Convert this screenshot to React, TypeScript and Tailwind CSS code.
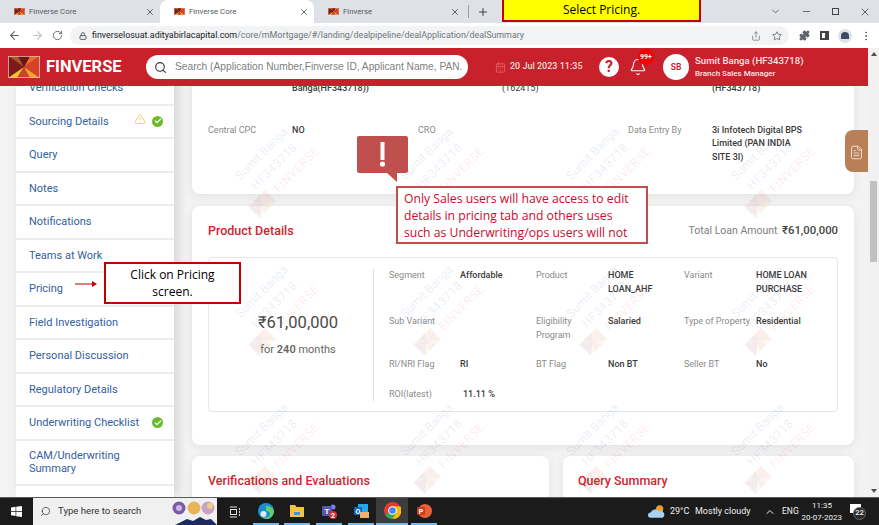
import { AlertTriangle, ArrowLeft, ArrowRight, Bell, CalendarDays, Check, ChevronDown, ChevronUp, FileText, Lock, Minus, MoreVertical, Plus, Puzzle, RotateCw, Search, Share, Star, X } from "lucide-react";

const ui = "font-['Roboto',sans-serif]";
const office = "font-['Open_Sans',sans-serif]";

function LogoMark({ className }: { className?: string }) {
  return (
    <svg viewBox="0 0 32 22" className={className}>
      <rect width="32" height="22" fill="#8f1d1f" />
      <polygon points="0,0 10,0 16,11" fill="#a5562c" />
      <polygon points="22,0 32,0 16,11" fill="#e8702a" />
      <polygon points="10,0 22,0 16,11" fill="#6d1517" />
      <polygon points="0,0 16,11 0,22" fill="#7d1a1c" />
      <polygon points="32,0 16,11 32,22" fill="#d8402a" />
      <polygon points="0,22 16,11 9,22" fill="#f2c230" />
      <polygon points="9,22 16,11 22,22" fill="#c8452a" />
      <polygon points="22,22 16,11 32,22" fill="#f0a62c" />
      <rect x="0.4" y="0.4" width="31.2" height="21.2" fill="none" stroke="#e8b9a8" strokeWidth="0.8" />
    </svg>
  );
}

function Tab({ title, active, width }: { title: string; active?: boolean; width: string }) {
  return (
    <div className={`flex h-[23px] items-center pl-[14px] pr-[5px] ${width} ${active ? "rounded-t-lg bg-white" : ""}`}>
      <LogoMark className="h-[7px] w-[11px] shrink-0" />
      <span className="ml-[4px] grow text-[7.8px] text-[#555a60]">{title}</span>
      <X size={10} strokeWidth={2} className="text-[#45484c]" />
    </div>
  );
}

function SideItem({ label, warn, done, tall }: { label: string; warn?: boolean; done?: boolean; tall?: boolean }) {
  return (
    <div className={`flex shrink-0 items-center border-b-2 border-[#ececec] pl-[13px] pr-[11px] text-[11px] leading-[13px] text-[#33609f] ${tall ? "h-[45px] pr-[20px]" : "h-[33.5px]"}`}>
      <span className="grow">{label}</span>
      {warn && <AlertTriangle size={12} strokeWidth={1.5} className="mr-[6px] -mt-[4px] text-[#f5c242]" />}
      {done && (
        <span className="flex size-[11px] items-center justify-center rounded-full bg-[#6cbb2f]">
          <Check size={8} strokeWidth={3.5} className="text-white" />
        </span>
      )}
    </div>
  );
}

function Label({ children }: { children: React.ReactNode }) {
  return <div className="text-[9px] leading-[13.5px] text-[#8a8a8a]">{children}</div>;
}

function Value({ children, className = "" }: { children: React.ReactNode; className?: string }) {
  return <div className={`text-[9px] font-medium leading-[13.5px] text-[#3a3a3a] ${className}`}>{children}</div>;
}

function Watermark() {
  return (
    <div className="flex h-[138px] w-[165.5px] items-center justify-center">
      <div className="flex w-[120px] shrink-0 -rotate-45 flex-col items-center pt-[8px] text-[12px] leading-[18px]">
        <div className="-translate-x-[5px] text-[rgba(60,110,190,0.12)]">Sumit Banga</div>
        <div className="-translate-x-[5px] tracking-[0.5px] text-[rgba(60,110,190,0.12)]">HF343718</div>
        <div className="flex -translate-x-[7px] items-center gap-[7px] whitespace-nowrap tracking-[0.5px] text-[rgba(220,60,40,0.1)]">
          <LogoMark className="h-[16px] w-[24px] opacity-[0.08]" />
          FINVERSE
        </div>
      </div>
    </div>
  );
}

function TaskIcon({ children, active }: { children: React.ReactNode; active?: boolean }) {
  return (
    <div className={`flex h-[27px] w-[31.6px] flex-col items-center justify-end ${active ? "bg-[#3c3c3c]" : ""}`}>
      <div className="flex grow items-center justify-center">{children}</div>
      <div className={`h-[2px] bg-[#76b9ed] ${active ? "w-full" : "w-[26px]"}`} />
    </div>
  );
}

export default function App() {
  return (
    <div className={`relative flex h-[525px] w-[879px] flex-col overflow-hidden bg-white ${ui}`}>
      {/* browser tabs */}
      <div className="flex h-[23px] shrink-0 items-center bg-[#dee1e6]">
        <Tab title="Finverse Core" width="w-[160px]" />
        <Tab title="Finverse Core" active width="w-[154px]" />
        <Tab title="Finverse" width="w-[151px]" />
        <div className="ml-[3px] h-[13px] w-px bg-[#9a9da1]" />
        <Plus size={12} strokeWidth={2} className="ml-[8px] text-[#3c4043]" />
        <div className="ml-auto flex items-center gap-[20px] pr-[8px] text-[#5f6368]">
          <ChevronDown size={11} />
          <Minus size={11} />
          <div className="relative size-[7px] border border-[#444]" />
          <X size={12} />
        </div>
      </div>

      {/* address bar */}
      <div className="flex h-[25px] shrink-0 items-center bg-white">
        <ArrowLeft size={13} strokeWidth={2} className="ml-[8px] text-[#5f6368]" />
        <ArrowRight size={13} strokeWidth={2} className="ml-[10px] text-[#c0c2c5]" />
        <RotateCw size={11} strokeWidth={2} className="ml-[8px] text-[#5f6368]" />
        <div className="ml-[7px] flex h-[19px] w-[719px] items-center rounded-full bg-[#f1f3f4] pl-[9px] pr-[6px]">
          <Lock size={8} strokeWidth={3} className="text-[#5f6368]" />
          <span className="ml-[5px] grow text-[8.9px] text-[#70757a]">
            <span className="text-[#202124]">finverselosuat.adityabirlacapital.com</span>/core/mMortgage/#/landing/dealpipeline/dealApplication/dealSummary
          </span>
          <Share size={10} className="mr-[11px] text-[#7b7f84]" />
          <Star size={10} strokeWidth={2} className="mr-[1px] text-[#5f6368]" />
        </div>
        <Puzzle size={11} fill="#5f6368" className="ml-[10px] text-[#5f6368]" />
        <div className="ml-[10px] size-[9px] border-2 border-r-[4px] border-[#444]" />
        <div className="ml-[9px] flex size-[14px] items-center justify-center rounded-full bg-[#dfe3ec]">
          <div className="h-[7px] w-[8px] rounded-t-full bg-[#3e4b66]" />
        </div>
        <MoreVertical size={12} className="ml-[8px] text-[#5f6368]" />
      </div>

      <div className="relative flex min-h-0 grow">
        <div className="flex w-[868px] shrink-0 flex-col">
          {/* app header */}
          <header className="z-10 flex h-[38px] shrink-0 items-center bg-[#c8212b] pl-[8px]">
            <LogoMark className="h-[22px] w-[32px]" />
            <span className="ml-[6px] w-[100px] text-[16.5px] font-bold text-white">FINVERSE</span>
            <div className="flex h-[24px] w-[322px] shrink-0 items-center overflow-hidden rounded-full bg-white pl-[8px]">
              <Search size={13} strokeWidth={2} className="shrink-0 text-[#333]" />
              <span className="ml-[8px] whitespace-nowrap font-['Liberation_Sans',sans-serif] text-[10.2px] text-[#808080]">Search (Application Number,Finverse ID, Applicant Name, PAN.</span>
            </div>
            <CalendarDays size={11} className="ml-[27px] shrink-0 text-[#e0625f]" />
            <span className="ml-[4px] w-[89px] shrink-0 whitespace-nowrap text-[9px] font-medium text-[#f6dcdc]">20 Jul 2023 11:35</span>
            <div className="flex size-[20px] shrink-0 items-center justify-center rounded-full bg-white text-[16px] font-bold leading-none text-[#c8212b]">?</div>
            <div className="relative ml-[10px]">
              <Bell size={18} strokeWidth={1.5} className="text-white" />
              <span className="absolute -right-[7px] -top-[9px] flex size-[16px] items-center justify-center rounded-full bg-[#f00000] text-[7px] font-bold text-white">99+</span>
            </div>
            <div className="ml-[16px] flex size-[26px] shrink-0 items-center justify-center rounded-full bg-white text-[8.5px] font-semibold text-[#c8212b]">SB</div>
            <div className="ml-[6px] whitespace-nowrap text-[#f8e4e4]">
              <div className="text-[9.6px] font-medium leading-[14px]">Sumit Banga (HF343718)</div>
              <div className="text-[8px] font-medium leading-[12px]">Branch Sales Manager</div>
            </div>
          </header>

          {/* scrolled page */}
          <div className="relative flex min-h-0 grow overflow-hidden bg-[#f3f3f3]">
            <aside className="ml-[16px] -mt-[14px] flex w-[158px] shrink-0 flex-col bg-white shadow-[4px_0_10px_rgba(0,0,0,0.12)]">
              <SideItem label="Verification Checks" />
              <SideItem label="Sourcing Details" warn done />
              <SideItem label="Query" />
              <SideItem label="Notes" />
              <SideItem label="Notifications" />
              <SideItem label="Teams at Work" />
              <SideItem label="Pricing" />
              <SideItem label="Field Investigation" />
              <SideItem label="Personal Discussion" />
              <SideItem label="Regulatory Details" />
              <SideItem label="Underwriting Checklist" done />
              <SideItem label="CAM/Underwriting Summary" tall />
              <SideItem label="Hunter" />
            </aside>

            <main className="ml-[18px] -mt-[30px] flex w-[662px] shrink-0 flex-col gap-[12px]">
              <section className="h-[138px] shrink-0 rounded-lg bg-white pl-[16px] pt-[26px] shadow-[0_2px_10px_rgba(0,0,0,0.08)]">
                <div className="grid grid-cols-[84px_126px_84px_126px_84px_126px]">
                  <div />
                  <Value>Banga(HF343718))</Value>
                  <div />
                  <Value className="font-normal">(162415)</Value>
                  <div />
                  <Value>(HF343718)</Value>
                </div>
                <div className="mt-[28px] grid grid-cols-[84px_126px_84px_126px_84px_126px]">
                  <Label>Central CPC</Label>
                  <Value>NO</Value>
                  <Label>CRO</Label>
                  <div />
                  <Label>Data Entry By</Label>
                  <Value>
                    3i Infotech Digital BPS
                    <br />
                    Limited (PAN INDIA
                    <br />
                    SITE 3I)
                  </Value>
                </div>
              </section>

              <section className="h-[239px] shrink-0 rounded-lg bg-white px-[16px] shadow-[0_2px_10px_rgba(0,0,0,0.08)]">
                <div className="flex h-[51px] items-center justify-between">
                  <h2 className="text-[12.5px] font-medium text-[#d0252f]">Product Details</h2>
                  <div className="text-[10.5px] text-[#808080]">
                    Total Loan Amount <span className="ml-[2px] text-[11.3px] font-medium text-[#444]">₹61,00,000</span>
                  </div>
                </div>
                <div className="flex h-[155px] rounded border border-[#e6e6e6] pb-[10px] pt-[11px]">
                  <div className="flex w-[165px] shrink-0 flex-col items-center border-r border-[#dcdcdc] pl-[14px]">
                    <div className="mt-[42px] text-[16.5px] leading-[24px] text-[#4a4a4a]">₹61,00,000</div>
                    <div className="mt-[7px] text-[11px] text-[#666]">for <b className="font-semibold">240</b> months</div>
                  </div>
                  <div className="ml-[15px] grid grid-cols-[71px_76px_72px_76px_72px_78px] grid-rows-[46px_43px_30px_auto]">
                    <Label>Segment</Label>
                    <Value>Affordable</Value>
                    <Label>Product</Label>
                    <Value>
                      HOME
                      <br />
                      LOAN_AHF
                    </Value>
                    <Label>Variant</Label>
                    <Value>
                      HOME LOAN
                      <br />
                      PURCHASE
                    </Value>
                    <Label>Sub Variant</Label>
                    <div />
                    <Label>
                      Eligibility
                      <br />
                      Program
                    </Label>
                    <Value>Salaried</Value>
                    <Label><span className="whitespace-nowrap">Type of Property</span></Label>
                    <Value>Residential</Value>
                    <Label>RI/NRI Flag</Label>
                    <Value>RI</Value>
                    <Label>BT Flag</Label>
                    <Value>Non BT</Value>
                    <Label>Seller BT</Label>
                    <Value>No</Value>
                    <Label>ROI(latest)</Label>
                    <Value className="pl-[3px]">11.11 %</Value>
                  </div>
                </div>
              </section>

              <div className="-mt-px flex gap-[14px]">
                <section className="h-[80px] w-[357px] shrink-0 rounded-lg bg-white pl-[16px] pt-[16px] shadow-[0_2px_10px_rgba(0,0,0,0.08)]">
                  <h2 className="text-[12.5px] font-medium text-[#d0252f]">Verifications and Evaluations</h2>
                </section>
                <section className="h-[80px] w-[291px] shrink-0 rounded-lg bg-white pl-[15px] pt-[16px] shadow-[0_2px_10px_rgba(0,0,0,0.08)]">
                  <h2 className="text-[12.5px] font-medium text-[#d0252f]">Query Summary</h2>
                </section>
              </div>
            </main>

            {/* watermark tiles lie over the cards */}
            <div className="pointer-events-none absolute left-[192px] top-[5px] grid grid-cols-[repeat(4,165.5px)]">
              {Array.from({ length: 12 }).map((_, i) => (
                <Watermark key={i} />
              ))}
            </div>

            {/* floating notes tab */}
            <div className="absolute right-0 top-[44px] flex h-[42px] w-[23px] items-center justify-center rounded-l-lg bg-[#b97f56] pt-[2px]">
              <FileText size={15} strokeWidth={1.5} className="text-[#f1e2d6]" />
            </div>
          </div>
        </div>

        {/* page scrollbar */}
        <div className="relative w-[11px] shrink-0 bg-[#f1f1f1]">
          <div className="absolute left-1/2 top-[4px] -translate-x-1/2 border-x-[3px] border-b-[4px] border-x-transparent border-b-[#505050]" />
          <div className="absolute inset-x-[2px] top-[133px] h-[81px] bg-[#c1c1c1]" />
          <div className="absolute bottom-[4px] left-1/2 -translate-x-1/2 border-x-[3px] border-t-[4px] border-x-transparent border-t-[#505050]" />
        </div>
      </div>

      {/* taskbar */}
      <footer className="z-10 flex h-[28px] shrink-0 items-center border-t border-[#5a5a5a] bg-[#1b1b1b] text-white">
        <div className="flex w-[33px] justify-center">
          <svg viewBox="0 0 12 12" className="size-[11px]" fill="white">
            <path d="M0 1.6 5 .9v4.6H0zM5.7.8 12 0v5.5H5.7zM0 6.2h5v4.7l-5-.7zM5.7 6.2H12V12l-6.3-.9z" />
          </svg>
        </div>
        <div className="flex h-[27px] w-[184px] items-center bg-[#f0f0f0] pl-[7px]">
          <Search size={11} strokeWidth={1.5} className="-scale-x-100 text-[#333]" />
          <span className="ml-[7px] grow text-[9.6px] text-[#333]">Type here to search</span>
          <svg viewBox="0 0 46 27" className="h-[27px] w-[46px]">
            <path d="M4 27 16 21l6 2 7-4 6 3 5-1 6 6z" fill="#1c2a5e" />
            <circle cx="8" cy="10" r="6.5" fill="#7d5aa8" />
            <circle cx="8" cy="10" r="3" fill="#c9b8e0" />
            <circle cx="23" cy="10" r="6.5" fill="#e8b456" />
            <circle cx="37" cy="10" r="6.5" fill="#c9a0c8" />
            <circle cx="39" cy="8" r="3" fill="#f0d080" />
          </svg>
        </div>
        <div className="flex w-[33px] justify-center pl-[2px]">
          <svg viewBox="0 0 12 12" className="size-[12px]" fill="none" stroke="#ddd">
            <path d="M1 1h7M1 11h7" />
            <rect x="1.5" y="3.5" width="6" height="5" />
            <path d="M10.5 2v2M10.5 5v2M10.5 8v2" />
          </svg>
        </div>
        <TaskIcon>
          <svg viewBox="0 0 16 16" className="size-[16px]">
            <circle cx="8" cy="8" r="8" fill="#1a8fd0" />
            <path d="M8 3c4 0 7 2 8 5 0 4-3 7-6 8-3 0-5-1-5-2 3 1 7 0 7-3 0-2-2-3-4-3z" fill="#5fd06a" />
            <circle cx="5.5" cy="11" r="3" fill="#dfe7ee" />
          </svg>
        </TaskIcon>
        <TaskIcon>
          <svg viewBox="0 0 16 16" className="size-[16px]"><path d="M1 2h5l1.5 2H15v10H1z" fill="#f4c542" /><rect x="5" y="9" width="6" height="3" fill="#3a9ad9" /></svg>
        </TaskIcon>
        <TaskIcon>
          <svg viewBox="0 0 16 16" className="size-[16px]">
            <circle cx="12" cy="4" r="2.5" fill="#7b83eb" />
            <rect x="1" y="3" width="10" height="10" rx="1" fill="#5558af" />
            <text x="6" y="11" fontSize="8" fontWeight="700" fill="white" textAnchor="middle">T</text>
            <circle cx="12" cy="12" r="4" fill="#d13438" />
            <text x="12" y="14.5" fontSize="7" fontWeight="700" fill="white" textAnchor="middle">2</text>
          </svg>
        </TaskIcon>
        <TaskIcon>
          <svg viewBox="0 0 16 16" className="size-[16px]">
            <rect x="5" y="1" width="10" height="8" fill="#28a8ea" />
            <rect x="1" y="4" width="8" height="8" rx="1" fill="#0f6cbd" />
            <text x="5" y="10.5" fontSize="7" fontWeight="700" fill="white" textAnchor="middle">O</text>
            <rect x="7" y="9" width="9" height="6" fill="#f0b070" />
          </svg>
        </TaskIcon>
        <TaskIcon active>
          <svg viewBox="0 0 16 16" className="size-[17px]">
            <circle cx="8" cy="8" r="8" fill="#e33b2e" />
            <path d="M8 8 1.1 12A8 8 0 0 0 8 16l3.5-6z" fill="#34a853" />
            <path d="M8 4h7.3A8 8 0 0 1 8 16l3.5-6z" fill="#fbbc04" />
            <circle cx="8" cy="8" r="3.6" fill="#4285f4" stroke="white" />
          </svg>
        </TaskIcon>
        <TaskIcon>
          <svg viewBox="0 0 16 16" className="size-[16px]">
            <circle cx="9" cy="8" r="7" fill="#e8613c" />
            <rect x="1" y="4" width="8" height="8" rx="1" fill="#c43e1c" />
            <text x="5" y="10.5" fontSize="7" fontWeight="700" fill="white" textAnchor="middle">P</text>
          </svg>
        </TaskIcon>
        <div className="ml-auto flex items-center pr-[13px] text-[9px] text-[#eee]">
          <svg viewBox="0 0 20 16" className="h-[15px] w-[18px]"><circle cx="13" cy="5" r="4" fill="#f0a030" /><path d="M3 15a3 3 0 0 1 0-6 5 5 0 0 1 9-1 4 4 0 0 1 4 7z" fill="#a8d0f0" /></svg>
          <span className="ml-[4px] w-[25px] whitespace-nowrap">29°C</span>
          <span className="w-[69px] whitespace-nowrap">Mostly cloudy</span>
          <ChevronUp size={12} />
          <span className="ml-[6px] w-[20px] text-[8.5px]">ENG</span>
          <div className="flex w-[40px] flex-col items-end whitespace-nowrap text-[8px] leading-[12px]">
            <span className="mr-[10px]">11:35</span>
            <span>20-07-2023</span>
          </div>
          <div className="relative ml-[8px] h-[16px] w-[16px]">
            <div className="absolute left-0 top-0 h-[9px] w-[11px] bg-white" />
            <div className="absolute bottom-0 right-0 flex size-[13px] items-center justify-center rounded-full border border-[#666] bg-[#2a2a2a] text-[7.5px] font-semibold">22</div>
          </div>
        </div>
      </footer>

      {/* annotations pasted over the screenshot */}
      <div className={`absolute left-[502px] top-0 flex h-[22px] w-[199px] items-center justify-center border-2 border-t-0 border-[#c00000] bg-[#ffff00] text-[12px] text-black ${office}`}>Select Pricing.</div>
      <svg viewBox="0 0 51 47" className="absolute left-[357px] top-[136px] h-[47px] w-[51px]">
        <path d="M2 0h47a2 2 0 0 1 2 2v33a2 2 0 0 1-2 2H40v9L30 37H2a2 2 0 0 1-2-2V2a2 2 0 0 1 2-2z" fill="#c0504d" />
        <rect x="23.5" y="6" width="4" height="18" fill="white" />
        <circle cx="25.5" cy="28" r="2.6" fill="white" />
      </svg>
      <div className={`absolute left-[396px] top-[186px] h-[58px] w-[252px] border-2 border-[#c0504d] bg-white pl-[6px] pt-[2px] text-[12.2px] leading-[17px] text-[#cc0a2e] ${office}`}>
        <div className="whitespace-nowrap">Only Sales users will have access to edit</div>
        <div className="whitespace-nowrap">details in pricing tab and others uses</div>
        <div className="whitespace-nowrap">such as Underwriting/ops users will not</div>
      </div>
      <div className={`absolute left-[104px] top-[262px] flex h-[42px] w-[137px] items-start justify-center border-2 border-[#c00000] bg-white pt-[2px] text-center text-[12px] leading-[17px] text-black ${office}`}>
        Click on Pricing
        <br />
        screen.
      </div>
      <svg viewBox="0 0 22 6" className="absolute left-[75px] top-[281px] h-[6px] w-[22px]">
        <path d="M0 2.5h17V0l5 3-5 3V3.5H0z" fill="#c00000" />
      </svg>
    </div>
  );
}
